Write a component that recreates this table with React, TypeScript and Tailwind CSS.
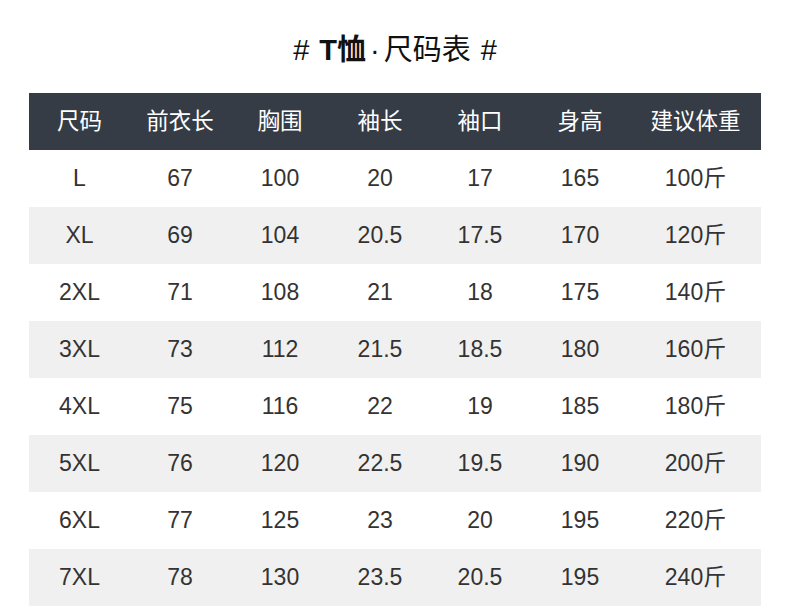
const headers = ["尺码", "前衣长", "胸围", "袖长", "袖口", "身高", "建议体重"];

const rows = [
    ["L", "67", "100", "20", "17", "165", "100斤"],
    ["XL", "69", "104", "20.5", "17.5", "170", "120斤"],
    ["2XL", "71", "108", "21", "18", "175", "140斤"],
    ["3XL", "73", "112", "21.5", "18.5", "180", "160斤"],
    ["4XL", "75", "116", "22", "19", "185", "180斤"],
    ["5XL", "76", "120", "22.5", "19.5", "190", "200斤"],
    ["6XL", "77", "125", "23", "20", "195", "220斤"],
    ["7XL", "78", "130", "23.5", "20.5", "195", "240斤"],
];

const cols = "grid grid-cols-[101px_100px_100px_100px_100px_100px_131px]";

export default function App() {
    return (
        <div
            className="w-[790px] h-[611px] bg-white overflow-hidden"
            style={{ fontFamily: '"Liberation Sans", "Noto Sans CJK SC", sans-serif' }}
        >
            <div className="h-[93px] flex items-center justify-center pt-[8px] text-[29px] text-[#111]">
                <span>#</span>
                <span className="font-bold ml-[10px]">T恤</span>
                <span className="mx-[4px]">·</span>
                <span>尺码表</span>
                <span className="ml-[10px]">#</span>
            </div>
            <div className="mx-[29px] w-[732px]">
                {/* header */}
                <div className={`${cols} h-[57px] bg-[#353c45] text-white text-[22.5px]`}>
                    {headers.map((h) => (
                        <div key={h} className="flex items-center justify-center">
                            {h}
                        </div>
                    ))}
                </div>
                {rows.map((r, i) => (
                    <div
                        key={r[0]}
                        className={`${cols} h-[57px] text-[23px] text-[#333] ${i % 2 === 1 ? "bg-[#f0f0f0]" : "bg-white"}`}
                    >
                        {r.map((c, j) => (
                            <div key={j} className="flex items-center justify-center">
                                {c}
                            </div>
                        ))}
                    </div>
                ))}
            </div>
        </div>
    );
}
